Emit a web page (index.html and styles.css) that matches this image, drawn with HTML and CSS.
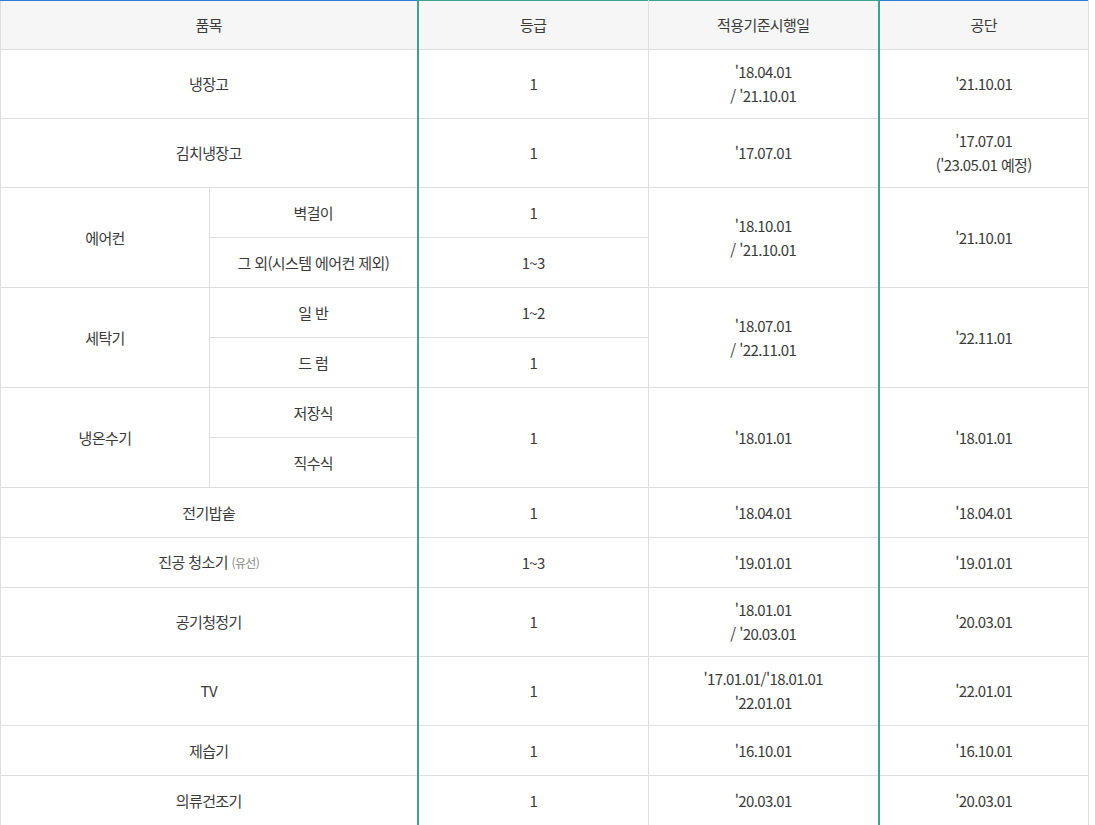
FILE: index.html
```html
<!DOCTYPE html>
<html lang="ko">
<head>
<meta charset="utf-8">
<title>품목별 적용기준</title>
<link rel="stylesheet" href="styles.css">
</head>
<body>
<table class="grid">
  <colgroup>
    <col class="c-a"><col class="c-b"><col class="c-grade"><col class="c-date"><col class="c-org">
  </colgroup>
  <thead>
    <tr class="head">
      <th colspan="2" class="blue">품목</th>
      <th class="grade">등급</th>
      <th class="date">적용기준시행일</th>
      <th class="blue">공단</th>
    </tr>
  </thead>
  <tbody>
    <tr class="tall">
      <td colspan="2">냉장고</td>
      <td class="grade">1</td>
      <td class="date">'18.04.01<br>/ '21.10.01</td>
      <td>'21.10.01</td>
    </tr>
    <tr class="tall">
      <td colspan="2">김치냉장고</td>
      <td class="grade">1</td>
      <td class="date">'17.07.01</td>
      <td>'17.07.01<br>('23.05.01 예정)</td>
    </tr>
    <tr>
      <td rowspan="2">에어컨</td>
      <td>벽걸이</td>
      <td class="grade">1</td>
      <td class="date" rowspan="2">'18.10.01<br>/ '21.10.01</td>
      <td rowspan="2">'21.10.01</td>
    </tr>
    <tr>
      <td>그 외(시스템 에어컨 제외)</td>
      <td class="grade">1~3</td>
    </tr>
    <tr>
      <td rowspan="2">세탁기</td>
      <td>일 반</td>
      <td class="grade">1~2</td>
      <td class="date" rowspan="2">'18.07.01<br>/ '22.11.01</td>
      <td rowspan="2">'22.11.01</td>
    </tr>
    <tr>
      <td>드 럼</td>
      <td class="grade">1</td>
    </tr>
    <tr>
      <td rowspan="2">냉온수기</td>
      <td>저장식</td>
      <td class="grade" rowspan="2">1</td>
      <td class="date" rowspan="2">'18.01.01</td>
      <td rowspan="2">'18.01.01</td>
    </tr>
    <tr>
      <td>직수식</td>
    </tr>
    <tr>
      <td colspan="2">전기밥솥</td>
      <td class="grade">1</td>
      <td class="date">'18.04.01</td>
      <td>'18.04.01</td>
    </tr>
    <tr>
      <td colspan="2">진공 청소기 <span class="note">(유선)</span></td>
      <td class="grade">1~3</td>
      <td class="date">'19.01.01</td>
      <td>'19.01.01</td>
    </tr>
    <tr class="tall">
      <td colspan="2">공기청정기</td>
      <td class="grade">1</td>
      <td class="date">'18.01.01<br>/ '20.03.01</td>
      <td>'20.03.01</td>
    </tr>
    <tr class="tall">
      <td colspan="2">TV</td>
      <td class="grade">1</td>
      <td class="date">'17.01.01/'18.01.01<br>'22.01.01</td>
      <td>'22.01.01</td>
    </tr>
    <tr>
      <td colspan="2">제습기</td>
      <td class="grade">1</td>
      <td class="date">'16.10.01</td>
      <td>'16.10.01</td>
    </tr>
    <tr>
      <td colspan="2">의류건조기</td>
      <td class="grade">1</td>
      <td class="date">'20.03.01</td>
      <td>'20.03.01</td>
    </tr>
  </tbody>
</table>
</body>
</html>
```

FILE: styles.css
```css
html, body {
  margin: 0;
  padding: 0;
  background: #fff;
}

body {
  font-family: "Noto Sans CJK KR", "Noto Sans", sans-serif;
  font-size: 15px;
  color: #3a3a3a;
}

.grid {
  border-collapse: collapse;
  table-layout: fixed;
  width: 1088px;
}

.c-a { width: 209px; }
.c-b { width: 208px; }
.c-grade { width: 231px; }
.c-date { width: 230px; }
.c-org { width: 210px; }

.grid th,
.grid td {
  border: 1px solid #dedede;
  text-align: center;
  vertical-align: middle;
  padding: 0 4px;
  line-height: 24px;
  font-weight: normal;
  letter-spacing: -0.6px;
}

.head { height: 49px; }
.head th { background: #f6f6f6; }
.grid th.blue { border-top: 1px solid #2f7bd3; }

.grid tbody tr { height: 50px; }
.grid tbody tr.tall { height: 69px; }

.grid .grade { border-left: 2px solid #3aa58c; }
.grid .date { border-right: 2px solid #3aa58c; }
.grid th.grade,
.grid th.date { border-top: 1px solid #3aa58c; }

.note {
  font-size: 12px;
  color: #888;
}
```
